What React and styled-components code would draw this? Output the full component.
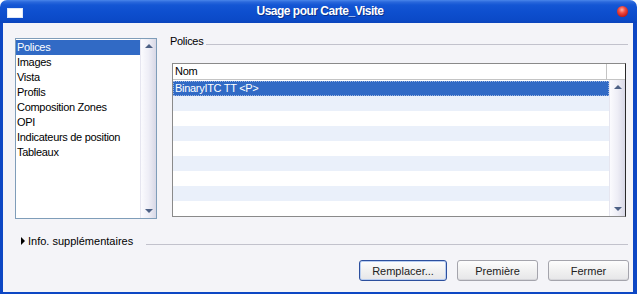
import React from "react";
import styled, { createGlobalStyle } from "styled-components";

const Global = createGlobalStyle`
  html, body { margin: 0; padding: 0; background: #ffffff; }
  body { font-family: "Liberation Sans", Arial, sans-serif; }
  * { box-sizing: border-box; }
`;

const Window = styled.div`
  width: 637px;
  height: 294px;
  display: flex;
  flex-direction: column;
`;

const TitleBar = styled.div`
  height: 23px;
  flex: none;
  display: flex;
  align-items: center;
  padding: 0 9px 0 7px;
  border-radius: 7px 7px 0 0;
  background: linear-gradient(
    to bottom,
    #4a86ea 0px,
    #2a68dc 2px,
    #1456d4 5px,
    #0e4fcf 50%,
    #0b4ac8 85%,
    #0a44bc 100%
  );
  color: #ffffff;
`;

const AppIcon = styled.div`
  width: 16px;
  height: 10px;
  margin-top: 3px;
  background: #ffffff;
  border: 1px solid #dfe8f8;
`;

const Title = styled.div`
  flex: 1;
  text-align: center;
  font-weight: bold;
  font-size: 12px;
  letter-spacing: -0.5px;
  line-height: 23px;
  text-shadow: 1px 1px 0 #0a2f8a;
`;

const CloseBtn = styled.div`
  width: 11px;
  height: 11px;
  border-radius: 50%;
  background: radial-gradient(circle at 45% 35%, #ffb0a8 0, #f04a3e 35%, #c01818 75%, #8a0808 100%);
`;

const Body = styled.div`
  flex: 1;
  display: flex;
  flex-direction: column;
  background: #f4f4f8;
  border-style: solid;
  border-color: #0d47c4;
  border-width: 0 4px 2px 3px;
  padding: 12px 5px 0 12px;
  font-size: 11px;
  color: #000;
`;

const TopRow = styled.div`
  display: flex;
  gap: 13px;
  align-items: flex-start;
`;

const ListBox = styled.div`
  margin-top: 3px;
  width: 142px;
  height: 181px;
  border: 1px solid #7f9db9;
  background: #ffffff;
  display: flex;
`;

const ListItems = styled.div`
  flex: 1;
  padding-top: 1px;
`;

const ListItem = styled.div`
  height: 15px;
  line-height: 15px;
  padding-left: 1px;
  white-space: nowrap;
  letter-spacing: -0.3px;
  background: ${(p) => (p.$selected ? "#316ac5" : "transparent")};
  color: ${(p) => (p.$selected ? "#ffffff" : "#000000")};
`;

const ScrollBar = styled.div`
  width: 16px;
  flex: none;
  display: flex;
  flex-direction: column;
  justify-content: space-between;
  align-items: center;
  padding: 5px 0;
  background: linear-gradient(to right, #fbfbfe 0%, #eeeef6 50%, #d8d8e6 100%);
  border-left: 1px solid #e6e6f0;
`;

const Arrow = styled.div`
  width: 0;
  height: 0;
  border-left: 4px solid transparent;
  border-right: 4px solid transparent;
  ${(p) =>
    p.$dir === "up"
      ? "border-bottom: 4px solid #4d6185;"
      : "border-top: 4px solid #4d6185;"}
`;

const Group = styled.div`
  width: 458px;
  display: flex;
  flex-direction: column;
`;

const GroupHeader = styled.div`
  display: flex;
  height: 13px;
`;

const GroupLabel = styled.div`
  line-height: 13px;
  letter-spacing: -0.3px;
`;

const Rule = styled.div`
  flex: 1;
  height: 1px;
  margin-top: ${(p) => p.$top}px;
  margin-left: ${(p) => p.$left}px;
  background: #c2c2cc;
`;

const Table = styled.div`
  margin-top: 15px;
  margin-left: 2px;
  width: 454px;
  height: 154px;
  border: 1px solid #8a8a8a;
  border-right-color: #2a2a2a;
  background: #ffffff;
  display: flex;
  flex-direction: column;
`;

const TableHead = styled.div`
  height: 16px;
  flex: none;
  display: flex;
  border-bottom: 1px solid #c4c4c4;
`;

const HeadCell = styled.div`
  width: 434px;
  padding-left: 2px;
  line-height: 15px;
  border-right: 1px solid #c4c4c4;
  letter-spacing: -0.3px;
`;

const HeadRest = styled.div`
  flex: 1;
`;

const TableBody = styled.div`
  flex: 1;
  display: flex;
  min-height: 0;
`;

const Rows = styled.div`
  flex: 1;
  padding-top: 1px;
  overflow: hidden;
`;

const Row = styled.div`
  height: 15px;
  line-height: 13px;
  padding-left: 1px;
  letter-spacing: -0.3px;
  background: ${(p) => (p.$selected ? "#316ac5" : p.$alt ? "#eaf0fa" : "#ffffff")};
  color: ${(p) => (p.$selected ? "#ffffff" : "#000000")};
  border: 1px ${(p) => (p.$selected ? "dotted #9db4e0" : "solid transparent")};
`;

const InfoRow = styled.div`
  margin-top: 15px;
  height: 16px;
  display: flex;
  align-items: flex-start;
`;

const Triangle = styled.div`
  width: 0;
  height: 0;
  margin: 3px 0 0 6px;
  border-top: 4px solid transparent;
  border-bottom: 4px solid transparent;
  border-left: 4px solid #000000;
`;

const InfoLabel = styled.div`
  margin-left: 3px;
  line-height: 14px;
`;

const ButtonRow = styled.div`
  margin-top: 10px;
  display: flex;
  justify-content: flex-end;
  gap: 10px;
  margin-right: -1px;
`;

const Button = styled.button`
  width: ${(p) => p.$w}px;
  height: 21px;
  padding: 0;
  font-family: "Liberation Sans", Arial, sans-serif;
  font-size: 11px;
  color: #222222;
  border-radius: 3px;
  border: 1px solid ${(p) => (p.$default ? "#2c4f9e" : "#a4a4ac")};
  background: linear-gradient(to bottom, #fdfdfd 0%, #f2f2f2 45%, #e6e6e8 100%);
  box-shadow: ${(p) =>
    p.$default ? "inset 0 0 0 1px #b8cdf0" : "inset 0 -1px 0 #d6d6da"};
`;

const listItems = [
  "Polices",
  "Images",
  "Vista",
  "Profils",
  "Composition Zones",
  "OPI",
  "Indicateurs de position",
  "Tableaux",
];

export default function App() {
  const rows = Array.from({ length: 9 }, (_, i) => i);
  return (
    <>
      <Global />
      <Window>
        <TitleBar>
          <AppIcon />
          <Title>Usage pour Carte_Visite</Title>
          <CloseBtn />
        </TitleBar>
        <Body>
          <TopRow>
            <ListBox>
              <ListItems>
                {listItems.map((t, i) => (
                  <ListItem key={t} $selected={i === 0}>
                    {t}
                  </ListItem>
                ))}
              </ListItems>
              <ScrollBar>
                <Arrow $dir="up" />
                <Arrow $dir="down" />
              </ScrollBar>
            </ListBox>
            <Group>
              <GroupHeader>
                <GroupLabel>Polices</GroupLabel>
                <Rule $top={9} $left={3} />
              </GroupHeader>
              <Table>
                <TableHead>
                  <HeadCell>Nom</HeadCell>
                  <HeadRest />
                </TableHead>
                <TableBody>
                  <Rows>
                    {rows.map((i) => (
                      <Row key={i} $selected={i === 0} $alt={i % 2 === 1}>
                        {i === 0 ? "BinaryITC TT <P>" : "\u00a0"}
                      </Row>
                    ))}
                  </Rows>
                  <ScrollBar>
                    <Arrow $dir="up" />
                    <Arrow $dir="down" />
                  </ScrollBar>
                </TableBody>
              </Table>
            </Group>
          </TopRow>
          <InfoRow>
            <Triangle />
            <InfoLabel>Info. supplémentaires</InfoLabel>
            <Rule $top={10} $left={13} />
          </InfoRow>
          <ButtonRow>
            <Button $w={88} $default>Remplacer...</Button>
            <Button $w={81}>Première</Button>
            <Button $w={81}>Fermer</Button>
          </ButtonRow>
        </Body>
      </Window>
    </>
  );
}
